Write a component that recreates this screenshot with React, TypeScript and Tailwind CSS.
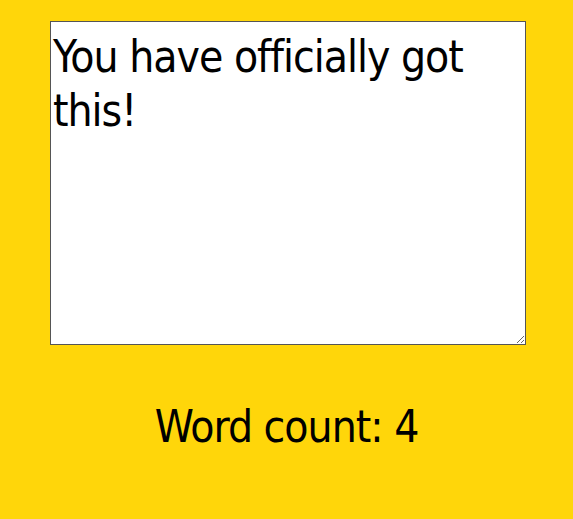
export default function App() {
  const text = 'You have officially got this!';

  return (
    <div
      className="flex min-h-screen flex-col items-center bg-[#ffd60a] pt-[21px]"
      style={{ fontFamily: '"DejaVu Sans Condensed", "Liberation Sans", sans-serif' }}
    >
      <textarea
        defaultValue={text}
        className="ml-[3px] h-[324px] w-[476px] resize border border-[#555] bg-white px-[2px] pt-[8px] text-[44px] leading-[54px] tracking-[-1px] text-black"
      />
      <p className="mt-[52px] text-[44px] leading-[60px] tracking-[-1px] text-black">Word count: 4</p>
    </div>
  );
}
